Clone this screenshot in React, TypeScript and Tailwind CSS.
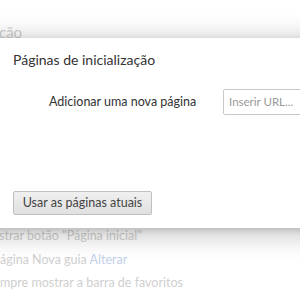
import React from "react";

const font = { fontFamily: '"Lato", "Noto Sans", sans-serif' };

export default function App() {
  return (
    <div
      className="relative w-[300px] h-[300px] overflow-hidden bg-white"
      style={font}
    >
      {/* Dimmed settings page behind the overlay */}
      <div className="flex flex-col text-[#cfcfcf]">
        <div className="mt-[23px] h-[18px] text-[15px] leading-[18px] -ml-[1px]">ção</div>
        <div className="mt-[187px] flex flex-col gap-[7px] text-[12.5px] leading-[16px]">
          <span className="-ml-[1px]">strar botão "Página inicial"</span>
          <span className="mt-[1px]">
            ágina Nova guia <span className="text-[#c4d0ea]">Alterar</span>
          </span>
          <span>mpre mostrar a barra de favoritos</span>
        </div>
      </div>

      {/* Startup pages dialog */}
      <div className="absolute left-[-20px] right-[-20px] top-[38px] h-[190px] bg-white flex flex-col pl-[33px] shadow-[0_4px_23px_5px_rgba(0,0,0,0.2),0_2px_6px_rgba(0,0,0,0.15)]">
        <h1 className="mt-[14px] text-[14px] leading-[16px] text-[#333]">
          Páginas de inicialização
        </h1>
        <div className="mt-[21px] flex items-center">
          <span className="ml-[36px] w-[174px] shrink-0 text-[12.5px] text-[#333]">
            Adicionar uma nova página
          </span>
          <div className="h-[26px] w-[110px] shrink-0 border border-[#c8c8c8] rounded-[2px] flex items-center pl-[5px] text-[11.5px] text-[#999]">
            Inserir URL...
          </div>
        </div>
        <div className="mt-auto mb-[13px]">
          <button className="h-[24px] w-[139px] border border-[#c0c0c0] rounded-[2px] bg-gradient-to-b from-[#f0f0f0] to-[#e0e0e0] text-[12.5px] text-[#444]">
            Usar as páginas atuais
          </button>
        </div>
      </div>
    </div>
  );
}
